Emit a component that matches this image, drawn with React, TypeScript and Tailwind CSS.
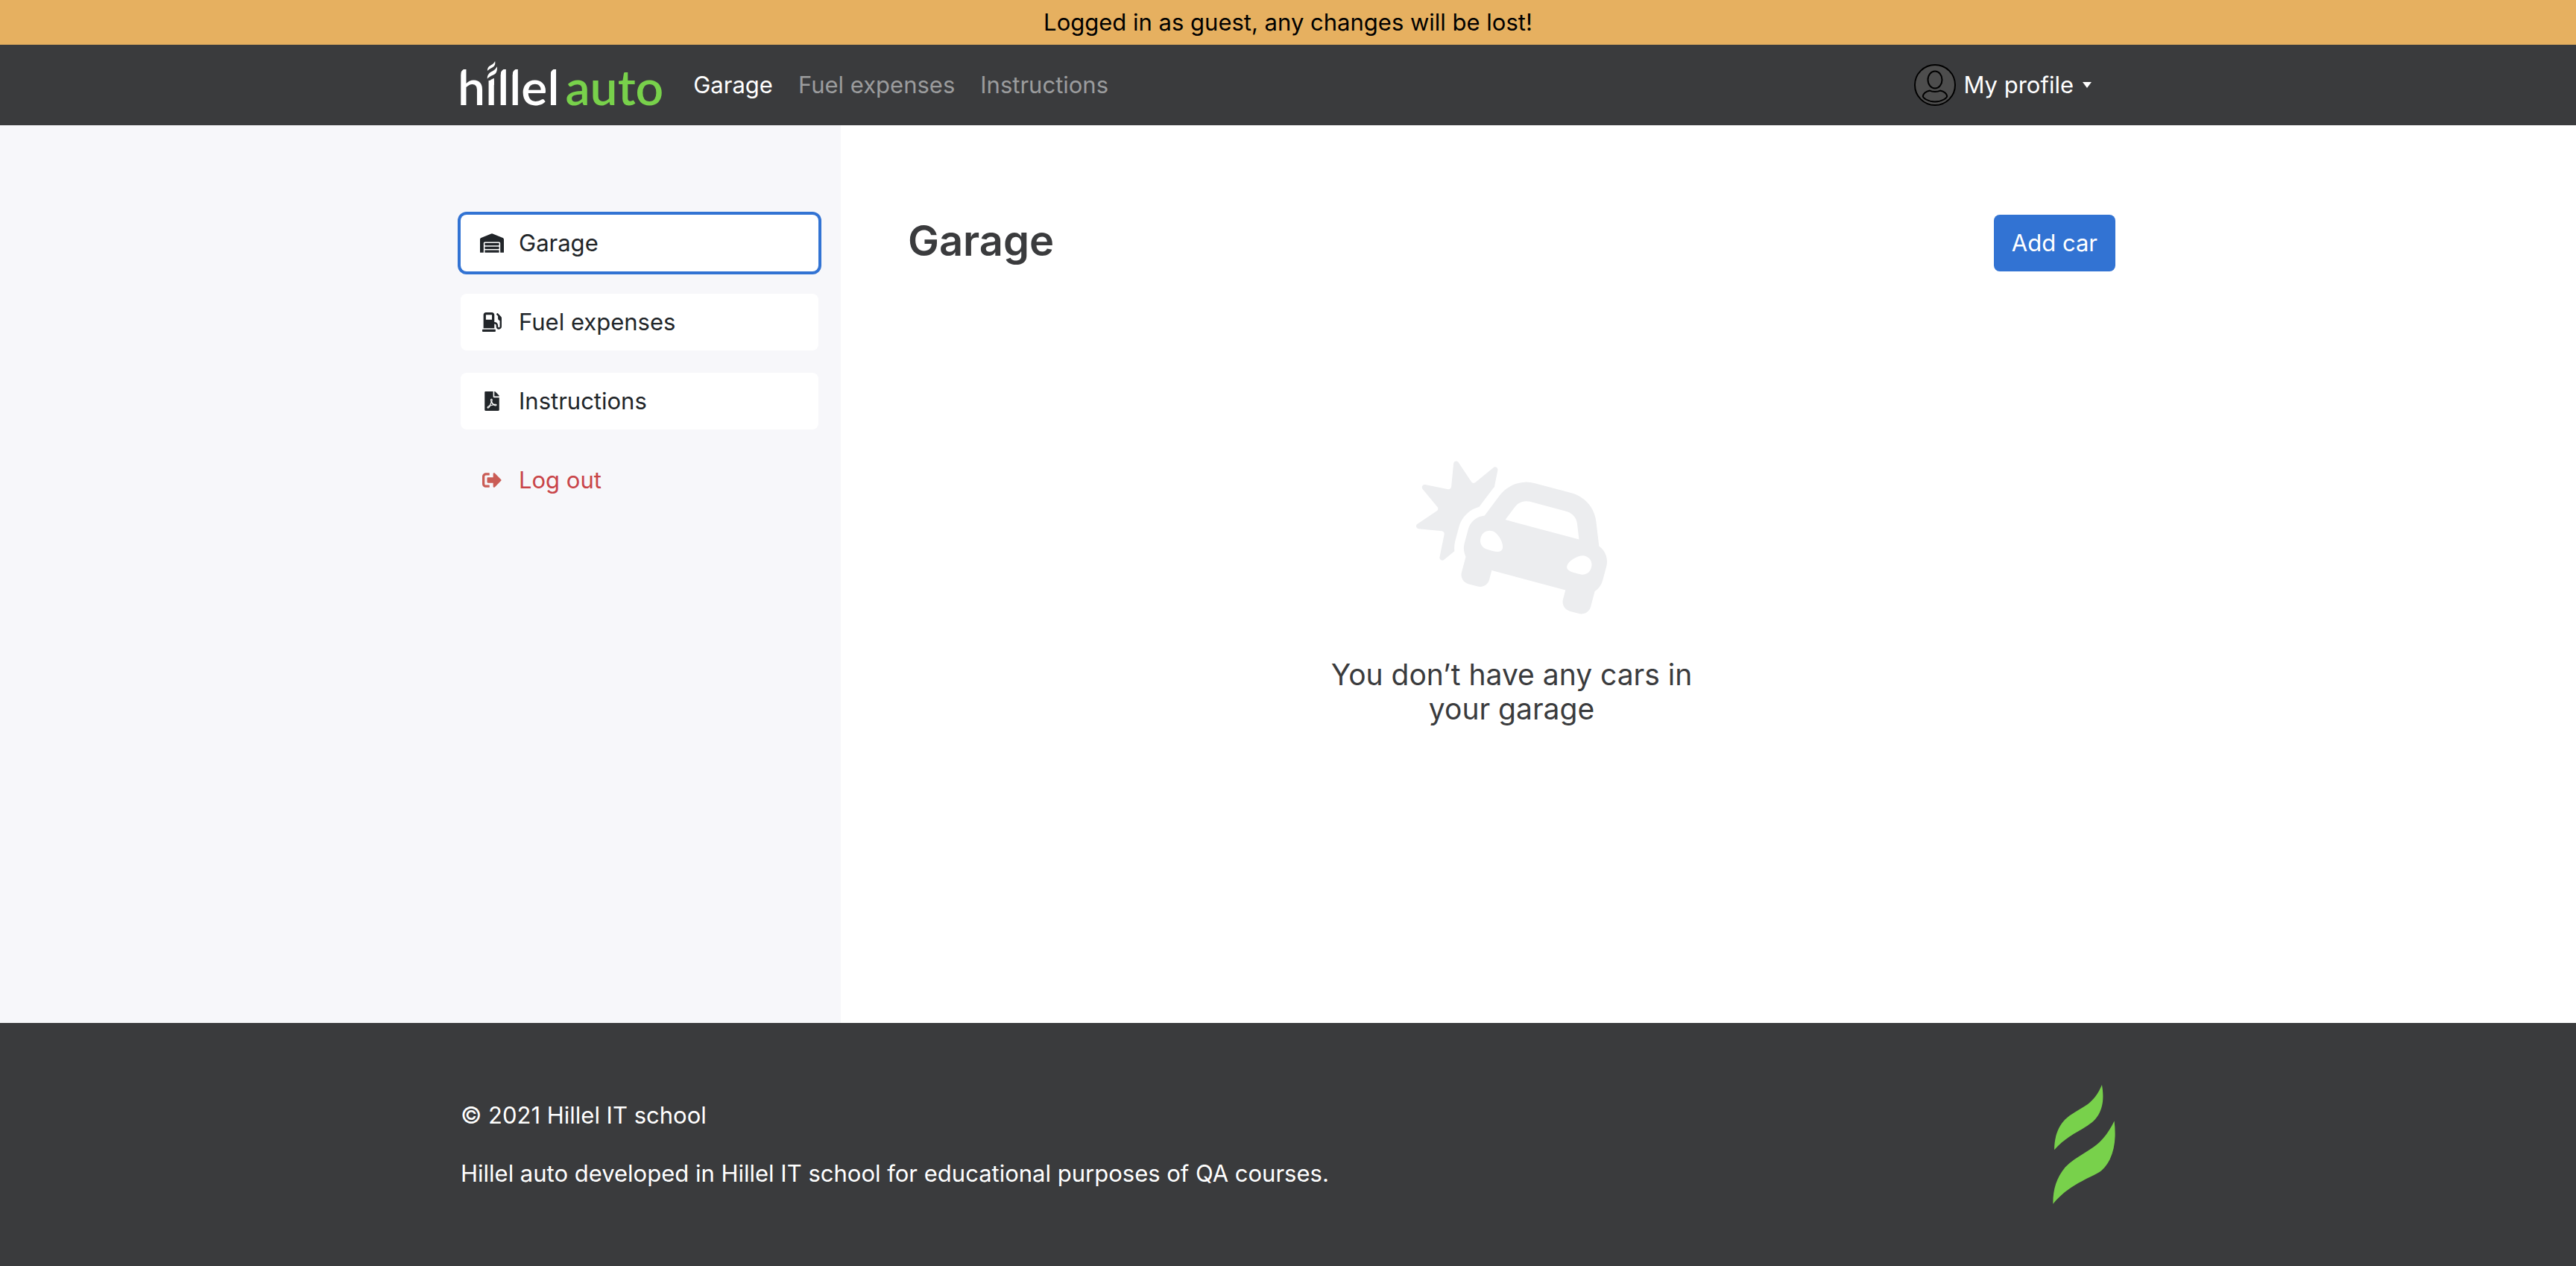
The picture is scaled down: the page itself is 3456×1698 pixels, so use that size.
import React from "react";
import { FaCarCrash, FaFilePdf, FaGasPump, FaSignOutAlt, FaWarehouse } from "react-icons/fa";

function LeafShapes() {
  return (
    <>
      <path d="M360 104C368 150 366 190 346 225C330 252 305 268 270 288C230 310 195 335 168 366C168 320 180 275 212 243C240 217 270 205 303 182C328 162 345 140 360 104Z" />
      <path d="M410 250C417 310 413 360 392 405C378 432 362 450 345 459C320 473 295 483 265 500C225 523 190 550 163 584C162 530 175 480 212 436C245 402 285 383 325 356C362 330 388 295 410 250Z" />
    </>
  );
}

/* Flame over the "i" and the rounded shoulders that cut the top left of each ascender. */
function LogoFlame() {
  return (
    <svg viewBox="0 0 136 80" className="absolute top-0 left-0 h-20 w-[136px]" aria-hidden="true">
      <g fill="#3a3b3d">
        <rect x="40" y="10" width="13" height="22" />
        <path d="M3 13H12V15C7 17 4.200 19 4.200 24H3Z" />
        <path d="M57 13H65.500V15C60.500 17 57.700 19 57.700 24H57Z" />
        <path d="M73 13H81.500V15C76.500 17 73.700 19 73.700 24H73Z" />
        <path d="M124 13H132.500V15C127.500 17 124.700 19 124.700 24H124Z" />
      </g>
      <path d="M42 38V36C42 32 44.500 30.500 48.900 29V38Z" fill="#fff" />
      <svg x="39.500" y="6" width="13.500" height="24" viewBox="162 104 252 481" preserveAspectRatio="none" fill="#fff">
        <LeafShapes />
      </svg>
    </svg>
  );
}

function Logo() {
  return (
    <a
      href="#home"
      className="-ml-1 flex items-baseline gap-2 pt-1 font-['Lato',sans-serif] text-[66px] leading-[80px] font-semibold"
    >
      <span className="relative text-white">
        hillel
        <LogoFlame />
      </span>
      <span className="text-[#78d14b]">auto</span>
    </a>
  );
}

function Avatar() {
  return (
    <svg viewBox="0 0 56 56" className="size-14" fill="none" stroke="#000" strokeWidth="2" aria-hidden="true">
      <circle cx="28" cy="28" r="27" fill="#4d4d4d" />
      <ellipse cx="28" cy="21" rx="9.5" ry="11.5" />
      <path d="M21 35.500C24 37.500 32 37.500 35 35.500C40 36.500 43.500 39.500 44.200 43C44.200 45 38 50.500 28 50.500C18 50.500 11.800 45 11.800 43C12.500 39.500 16 36.500 21 35.500Z" />
    </svg>
  );
}

const navLinks = [
  { label: "Garage", active: true },
  { label: "Fuel expenses", active: false },
  { label: "Instructions", active: false },
];

const sideLinks = [
  { label: "Garage", Icon: FaWarehouse, size: "h-[26px] w-8", active: true },
  { label: "Fuel expenses", Icon: FaGasPump, size: "size-[26px]", active: false },
  { label: "Instructions", Icon: FaFilePdf, size: "h-[26px] w-5", active: false },
];

export default function App() {
  return (
    <div className="flex min-h-screen flex-col bg-white font-['Inter',sans-serif] text-[31px] leading-[48px] text-[#212529]">
      <p className="bg-[#e6b060] py-1.5 text-center text-black">Logged in as guest, any changes will be lost!</p>

      <header className="bg-[#3a3b3d]">
        <div className="mx-auto flex h-[108px] max-w-[2280px] items-center px-[30px]">
          <Logo />
          <nav className="ml-10 flex gap-[34px]">
            {navLinks.map(({ label, active }) => (
              <a key={label} href="#nav" className={active ? "text-white" : "text-[#9b9c9d]"}>
                {label}
              </a>
            ))}
          </nav>
          <button type="button" className="mr-8 ml-auto flex items-center text-white">
            <Avatar />
            <span className="ml-2.5">My profile</span>
            <svg viewBox="0 0 12 8" className="ml-3 h-2 w-3" fill="currentColor" aria-hidden="true">
              <path d="M0 0H12L6 8Z" />
            </svg>
          </button>
        </div>
      </header>

      <div className="grid grow grid-cols-[1fr_540px_minmax(0,1740px)_1fr]">
        <aside className="col-span-2 flex justify-end bg-[#f7f7fa]">
          <nav className="flex w-[540px] flex-col gap-[30px] px-[30px] pt-[120px]">
            {sideLinks.map(({ label, Icon, size, active }) => (
              <a
                key={label}
                href="#section"
                className={
                  active
                    ? "flex h-[76px] items-center rounded-lg bg-white px-6 ring-4 ring-[#3273d3]"
                    : "flex h-[76px] items-center rounded-lg bg-white px-6"
                }
              >
                <span className="mr-[18px] flex w-9 justify-center">
                  <Icon className={size} />
                </span>
                {label}
              </a>
            ))}
            <button type="button" className="flex h-[76px] items-center px-6 text-[#c94549]">
              <span className="mr-[18px] flex w-9 justify-center text-[#ca5c55]">
                <FaSignOutAlt className="size-[26px]" />
              </span>
              Log out
            </button>
          </nav>
        </aside>

        <main className="px-[30px] pt-[120px] pl-[90px]">
          <div className="flex items-start justify-between">
            <h1 className="text-[56px] leading-[70px] font-semibold text-[#3a3b3d]">Garage</h1>
            <button type="button" className="h-[76px] rounded-lg bg-[#3273d3] px-6 text-white">
              Add car
            </button>
          </div>
          <div className="mt-[254px] flex flex-col items-center">
            <FaCarCrash className="h-[206px] w-64 text-[#ecedef]" />
            <p className="mt-[58px] w-[500px] text-center text-[39px] leading-[46px] text-[#3a3b3d]">
              You don’t have any cars in your garage
            </p>
          </div>
        </main>
      </div>

      <footer className="bg-[#3a3b3d] text-white">
        <div className="mx-auto flex max-w-[2280px] items-center justify-between px-[30px] py-[83px]">
          <div className="flex flex-col gap-[30px]">
            <p>© 2021 Hillel IT school</p>
            <p>Hillel auto developed in Hillel IT school for educational purposes of QA courses.</p>
          </div>
          <a href="#home" aria-label="Hillel IT school" className="text-[#78d14b]">
            <svg viewBox="162 104 252 481" className="h-40 w-[84px]" fill="currentColor" aria-hidden="true">
              <LeafShapes />
            </svg>
          </a>
        </div>
      </footer>
    </div>
  );
}
